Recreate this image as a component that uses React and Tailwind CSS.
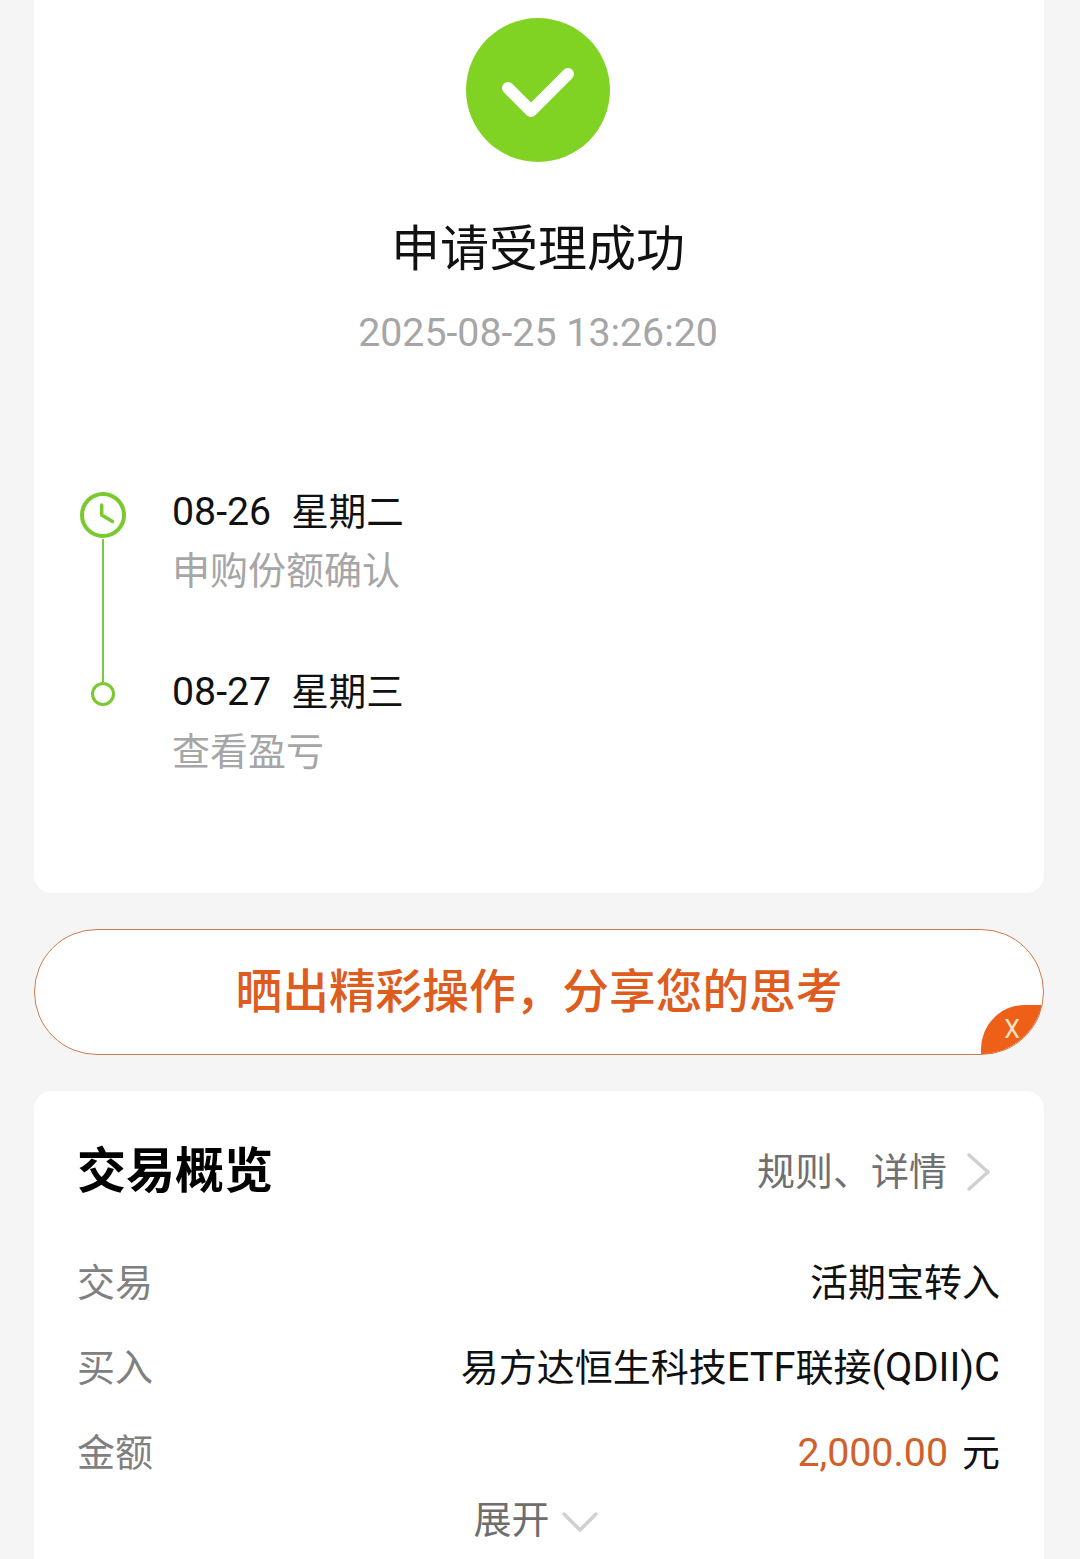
import React from 'react';

const font = "font-['Roboto','Noto_Sans_CJK_SC',sans-serif]";

const App = () => {
  return (
    <div className={`${font} h-[1559px] overflow-hidden bg-[#f5f5f5] pl-[34px] pr-[36px]`}>
      <div className="h-[893px] rounded-b-[18px] bg-white pt-[18px]">
        <div className="flex flex-col items-center pr-[2px]">
          <svg width="144" height="144" viewBox="0 0 144 144" fill="none" className="shrink-0">
            <circle cx="72" cy="72" r="72" fill="#80d323" />
            <path d="M42 70 L65 93 L102 56" stroke="#fff" strokeWidth="12" strokeLinecap="round" strokeLinejoin="round" />
          </svg>
          <h1 className="mt-[59px] text-[49px] leading-[58px] text-[#111]">申请受理成功</h1>
          <p className="mt-[31px] text-[39.300px] leading-[46px] text-[#a6a6a6]">2025-08-25 13:26:20</p>
        </div>

        <div className="mt-[133px] flex pl-[45px]">
          <div className="flex w-[48px] flex-col items-center pt-[2px]">
            <svg width="48" height="48" viewBox="0 0 48 48" fill="none" className="shrink-0">
              <circle cx="24" cy="24" r="21" stroke="#7ac92f" strokeWidth="4" />
              <path d="M22.700 14 V24 L33.500 30.500" stroke="#7ac92f" strokeWidth="3.500" strokeLinecap="round" strokeLinejoin="round" />
            </svg>
            <div className="h-[143px] w-[2.500px] bg-[#7ac943]" />
            <div className="h-[24px] w-[24px] shrink-0 rounded-full border-[3px] border-[#7ac92f]" />
          </div>
          <div className="ml-[45px] flex flex-col">
            <div className="flex items-baseline text-[39.300px] leading-[46px] text-[#111]">
              <span>08-26</span>
              <span className="ml-[20px] text-[37.500px]">星期二</span>
            </div>
            <div className="mt-[13px] text-[38px] leading-[46px] text-[#a6a6a6]">申购份额确认</div>
            <div className="mt-[75px] flex items-baseline text-[39.300px] leading-[46px] text-[#111]">
              <span>08-27</span>
              <span className="ml-[20px] text-[37.500px]">星期三</span>
            </div>
            <div className="mt-[14px] text-[38px] leading-[46px] text-[#a6a6a6]">查看盈亏</div>
          </div>
        </div>
      </div>

      <div className="relative mt-[36px] flex h-[126px] items-center justify-center overflow-hidden rounded-full border-[1.500px] border-[#cf7a4c] bg-white">
        <span className="text-[46.700px] font-medium leading-[56px] text-[#dd5c1e]">{'晒出精彩操作\uFF0C分享您的思考'}</span>
        <div className="absolute bottom-0 right-0 flex h-[49px] w-[62px] items-center justify-center rounded-tl-[44px] bg-[#ee5f17] text-[25px] text-[#ffe3c8]">
          X
        </div>
      </div>

      <div className="mt-[36px] h-[469px] rounded-t-[18px] bg-white pl-[43px] pr-[44px] pt-[50px]">
        <div className="flex items-center justify-between">
          <h2 className="text-[49px] font-bold leading-[62px] text-black">交易概览</h2>
          <div className="flex items-center text-[38px] text-[#707070]">
            <span>规则、详情</span>
            <svg width="24" height="38" viewBox="0 0 24 38" fill="none" className="ml-[20px] mr-[9px]">
              <path d="M2 2 L21 19 L2 36" stroke="#d0d0d0" strokeWidth="3.500" strokeLinecap="round" strokeLinejoin="round" />
            </svg>
          </div>
        </div>
        <div className="mt-[57px] flex flex-col gap-[39px]">
          <div className="flex h-[46px] items-center justify-between text-[38px] leading-[46px]">
            <span className="text-[#808080]">交易</span>
            <span className="text-[#111]">活期宝转入</span>
          </div>
          <div className="flex h-[46px] items-center justify-between text-[38px] leading-[46px]">
            <span className="text-[#808080]">买入</span>
            <span className="text-[#111]">
              易方达恒生科技<span className="text-[39.800px]">ETF</span>联接<span className="text-[39.800px]">(QDII)C</span>
            </span>
          </div>
          <div className="flex h-[46px] items-center justify-between text-[38px] leading-[46px]">
            <span className="text-[#808080]">金额</span>
            <span className="text-[#111]">
              <span className="text-[39.300px] text-[#d2602a]">2,000.00</span>
              <span className="ml-[14px]">元</span>
            </span>
          </div>
        </div>
        <div className="mt-[21px] flex items-center justify-center pr-[6px] text-[38px] leading-[46px] text-[#6e6e6e]">
          <span>展开</span>
          <svg width="36" height="22" viewBox="0 0 36 22" fill="none" className="ml-[12px] mt-[4px]">
            <path d="M2 3 L18 19 L34 3" stroke="#d0d0d0" strokeWidth="3.500" strokeLinecap="round" strokeLinejoin="round" />
          </svg>
        </div>
      </div>
    </div>
  );
};

export default App;
